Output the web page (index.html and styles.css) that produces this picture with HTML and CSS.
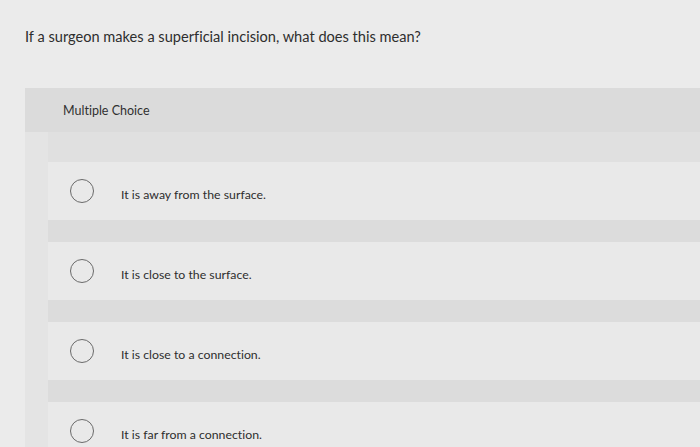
FILE: index.html
```html
<!DOCTYPE html>
<html>
<head>
<meta charset="utf-8">
<link rel="stylesheet" href="styles.css">
</head>
<body>
<div class="question">If a surgeon makes a superficial incision, what does this mean?</div>
<div class="panel">
  <div class="panel-header">Multiple Choice</div>
  <div class="panel-body">
    <div class="strip"></div>
    <div class="choices">
      <div class="spacer"></div>
      <div class="choice"><span class="radio"></span><span class="label">It is away from the surface.</span></div>
      <div class="band"></div>
      <div class="choice"><span class="radio"></span><span class="label">It is close to the surface.</span></div>
      <div class="band"></div>
      <div class="choice"><span class="radio"></span><span class="label">It is close to a connection.</span></div>
      <div class="band"></div>
      <div class="choice"><span class="radio"></span><span class="label">It is far from a connection.</span></div>
    </div>
  </div>
</div>
</body>
</html>
```
FILE: styles.css
```css
html, body {
  margin: 0;
  padding: 0;
}
body {
  background: #ebebeb;
  font-family: Lato, "Open Sans", sans-serif;
  font-variant-ligatures: none;
  color: #2e2e2e;
  width: 700px;
  height: 447px;
  overflow: hidden;
}
.question {
  padding: 28px 0 0 25px;
  height: 88px;
  box-sizing: border-box;
  font-size: 14.6px;
  line-height: 18px;
}
.panel {
  margin-left: 25px;
}
.panel-header {
  height: 44px;
  box-sizing: border-box;
  padding: 15px 0 0 38px;
  background: #dbdbdb;
  font-size: 12.5px;
  line-height: 16px;
  color: #303030;
}
.panel-body {
  display: flex;
}
.strip {
  width: 23px;
  background: #e4e4e4;
}
.choices {
  flex: 1;
  display: flex;
  flex-direction: column;
}
.spacer {
  height: 30px;
  background: #e0e0e0;
}
.band {
  height: 22px;
  background: #dcdcdc;
}
.choice {
  height: 58px;
  flex: none;
  background: #e9e9e9;
  display: flex;
  align-items: center;
  padding-left: 22px;
}
.radio {
  width: 22px;
  height: 22px;
  border: 1.5px solid #6a6a6a;
  border-radius: 50%;
  flex: none;
}
.label {
  margin-left: 27px;
  padding-top: 6px;
  font-size: 12.3px;
  color: #2e2e2e;
}
```
